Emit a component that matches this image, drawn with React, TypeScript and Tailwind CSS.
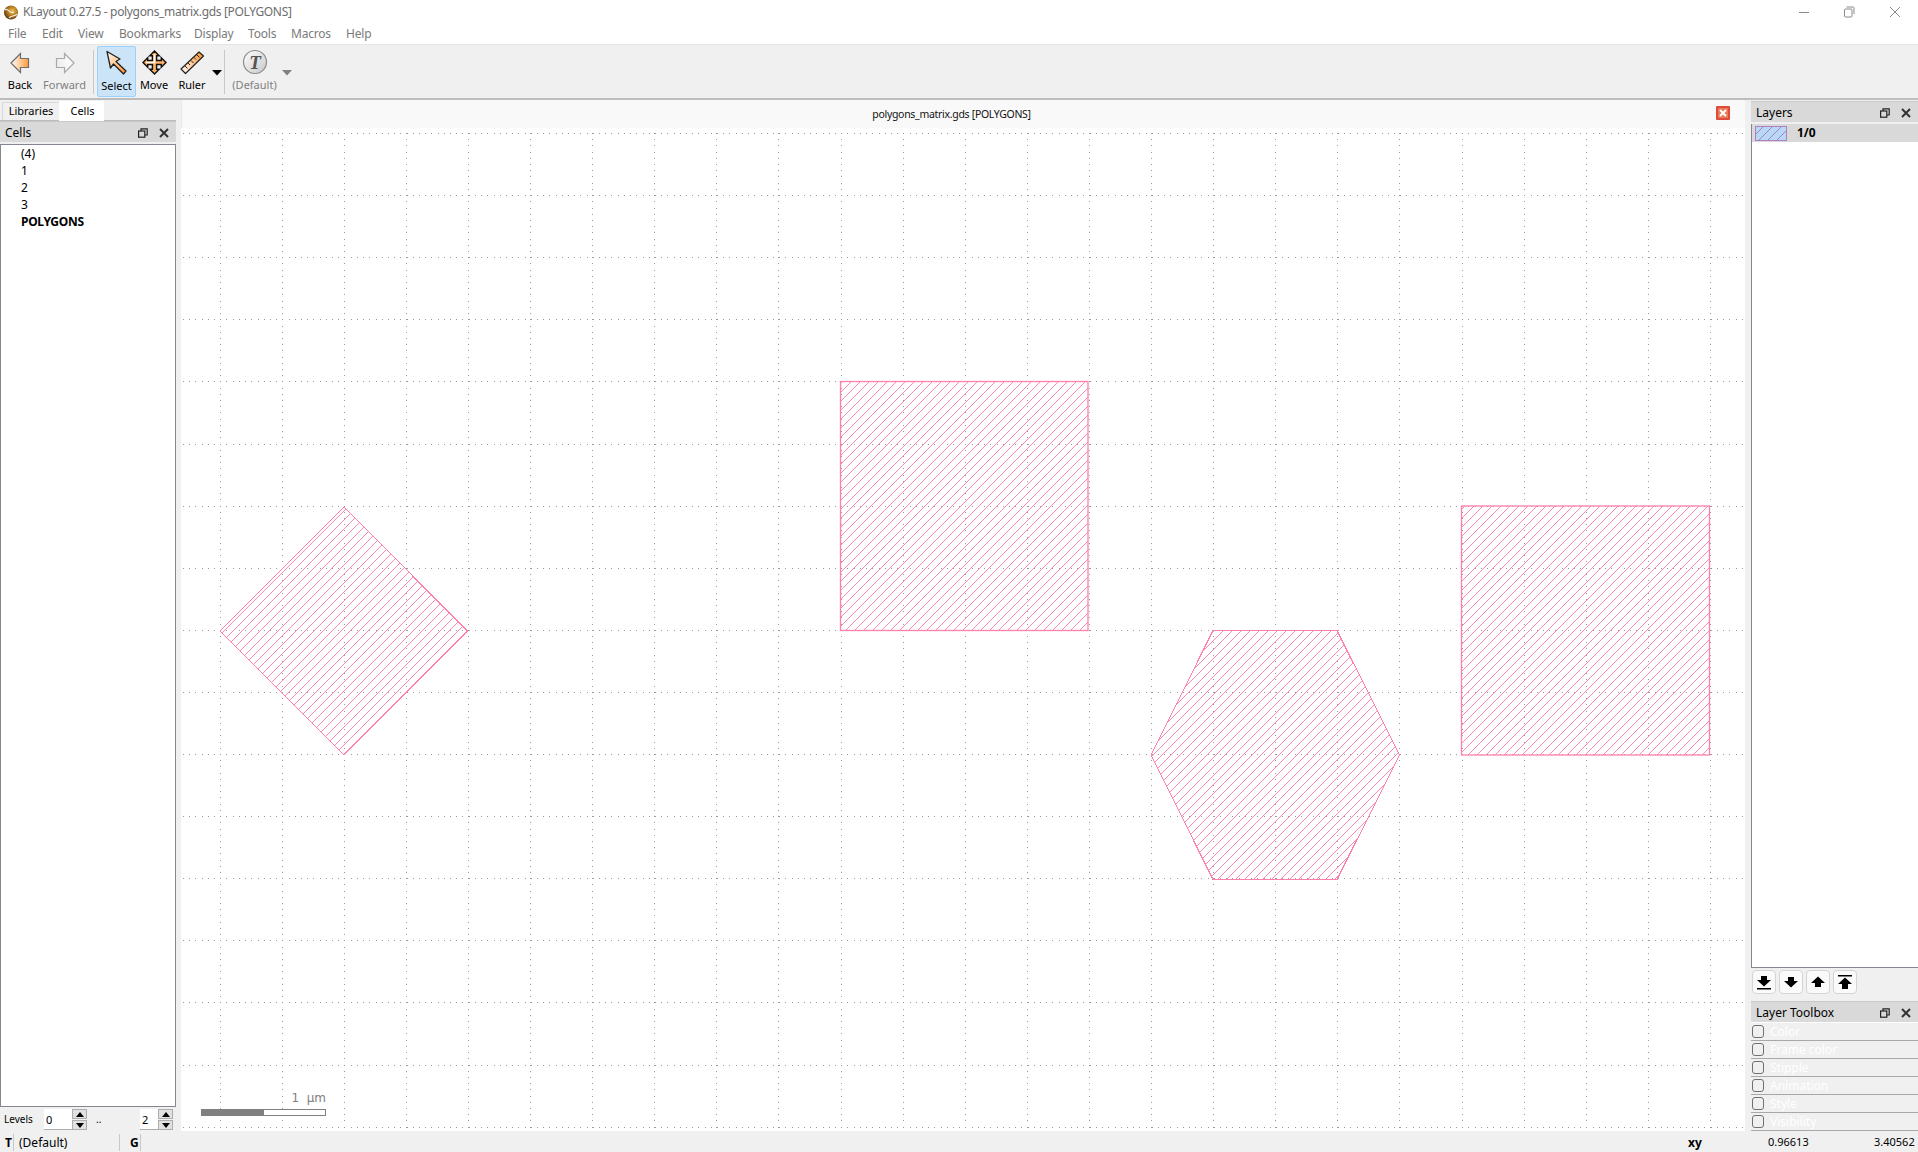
import { ReactNode } from "react";

const menus = [
  { label: "File", w: "w-[34px]" },
  { label: "Edit", w: "w-[36px]" },
  { label: "View", w: "w-[41px]" },
  { label: "Bookmarks", w: "w-[75px]" },
  { label: "Display", w: "w-[54px]" },
  { label: "Tools", w: "w-[43px]" },
  { label: "Macros", w: "w-[55px]" },
  { label: "Help", w: "w-[40px]" },
];

const cells = ["(4)", "1", "2", "3"];
const toolbox = ["Color", "Frame color", "Stipple", "Animation", "Style", "Visibility"];

const gridX = Array.from({ length: 25 }, (_, k) => Math.round(219.5 + 62.1 * k) + 0.5);
const gridY = Array.from({ length: 17 }, (_, k) => Math.round(133 + 62.1 * k) + 0.5);

const DockTitle = ({ title }: { title: string }) => (
  <div className="h-[21px] flex items-center bg-[#d9d9d9] border-t border-[#c8c8c8] pt-[1px] pl-[5px] pr-[7px] text-[12px] text-black">
    <span className="flex-1">{title}</span>
    <svg width="10" height="10" viewBox="0 0 10 10" className="mr-[11px]" fill="none" stroke="#222" strokeWidth="1.2">
      <rect x="0.6" y="3" width="6.2" height="6.2" />
      <path d="M3 3V0.8H9.2V7H6.8" />
    </svg>
    <svg width="10" height="10" viewBox="0 0 10 10" fill="none" stroke="#333" strokeWidth="2">
      <path d="M1 1L9 9M9 1L1 9" />
    </svg>
  </div>
);

const ToolButton = ({
  label,
  width,
  active,
  muted,
  children,
}: {
  label: string;
  width: string;
  active?: boolean;
  muted?: boolean;
  children: ReactNode;
}) => (
  <div
    className={`${width} h-[51px] flex flex-col items-center rounded-[2px] border ${
      active ? "bg-[#cce4f7] border-[#99d1ff]" : "border-transparent"
    }`}
  >
    <div className="h-[31px] flex items-center justify-center">{children}</div>
    <span className={`text-[11px] leading-[14px] ${active ? "mt-[1px]" : ""} ${muted ? "text-[#808080]" : "text-black"}`}>{label}</span>
  </div>
);

const Caret = ({ color }: { color: string }) => (
  <svg width="10" height="6" viewBox="0 0 10 6" className="mt-[2px]">
    <path d="M0 0H10L5 5.5Z" fill={color} />
  </svg>
);

const Spin = () => (
  <div className="w-[15px] h-[21px] flex flex-col gap-[1px] bg-[#f0f0f0]">
    <div className="h-[10px] bg-[#e1e1e1] border border-[#adadad] flex items-center justify-center">
      <svg width="8" height="5" viewBox="0 0 8 5"><path d="M4 0L8 5H0Z" fill="#000" /></svg>
    </div>
    <div className="h-[10px] bg-[#e1e1e1] border border-[#adadad] flex items-center justify-center">
      <svg width="8" height="5" viewBox="0 0 8 5"><path d="M0 0H8L4 5Z" fill="#000" /></svg>
    </div>
  </div>
);

const LayerButton = ({ d }: { d: string }) => (
  <div className="w-[24px] h-[24px] rounded-[4px] bg-[#fafafa] border border-[#d4d4d4] flex items-center justify-center">
    <svg width="16" height="16" viewBox="0 0 16 16"><path d={d} fill="#000" /></svg>
  </div>
);

const LayoutCanvas = () => (
  <svg viewBox="181 128 1564 1003" width="1564" height="1003" className="block">
    <defs>
      <pattern id="hatch" width="9" height="9" patternUnits="userSpaceOnUse">
        <path d="M0 9L9 0" stroke="#ff8ab0" strokeWidth="1" shapeRendering="crispEdges" />
      </pattern>
    </defs>
    {gridY.map((y) => (
      <line key={y} x1="183" x2="1745" y1={y} y2={y} stroke="#9a9a9a" strokeDasharray="1 5.21" shapeRendering="crispEdges" />
    ))}
    {gridX.map((x) => (
      <line key={x} x1={x} x2={x} y1="133" y2="1131" stroke="#9a9a9a" strokeDasharray="1 5.21" shapeRendering="crispEdges" />
    ))}
    <g fill="url(#hatch)" stroke="#ff80a8">
      <polygon points="344,507 467.5,631 344,755 220,631" strokeWidth="1" shapeRendering="crispEdges" />
      <rect x="840.5" y="381.5" width="247.5" height="249" strokeWidth="1.3" />
      <polygon points="1151,755 1213,630.5 1337,630.5 1399.5,755 1337,879.5 1213,879.5" strokeWidth="1" shapeRendering="crispEdges" />
      <rect x="1461.5" y="506" width="248" height="249" strokeWidth="1.3" />
    </g>
  </svg>
);

export default function App() {
  return (
    <div className="w-[1918px] h-[1152px] flex flex-col overflow-hidden bg-[#f0f0f0] font-['Noto_Sans','Open_Sans',sans-serif] text-black">
      {/* Title and menu */}
      <div className="h-[45px] bg-white border-b border-[#e5e5e5] shrink-0">
        <div className="h-[24px] flex items-center pl-[2px]">
          <svg width="18" height="18" viewBox="0 0 18 18">
            <defs>
              <radialGradient id="logo" cx="0.6" cy="0.4" r="0.7">
                <stop offset="0" stopColor="#f4c04a" />
                <stop offset="0.6" stopColor="#a06a18" />
                <stop offset="1" stopColor="#3a2a10" />
              </radialGradient>
            </defs>
            <circle cx="9" cy="9.5" r="7" fill="url(#logo)" />
            <path d="M3 7C6 4 8 12 12 9M7 15C9 12 13 14 15 11" stroke="#eee" strokeWidth="1.2" fill="none" />
          </svg>
          <span className="ml-[3px] text-[12px] tracking-[-0.33px] text-[#6d6d6d]">KLayout 0.27.5 - polygons_matrix.gds [POLYGONS]</span>
          <div className="ml-auto flex items-center">
            <svg width="12" height="12" viewBox="0 0 12 12" className="mr-[33px]"><path d="M1 6.5H11" stroke="#8a8a8a" /></svg>
            <svg width="12" height="12" viewBox="0 0 12 12" className="mr-[34px]" fill="none" stroke="#8a8a8a">
              <rect x="1.5" y="3" width="7.5" height="8" rx="1" />
              <path d="M3.5 1H10A1 1 0 0 1 11 2V8" />
            </svg>
            <svg width="12" height="12" viewBox="0 0 12 12" className="mr-[17px]"><path d="M1 1L11 11M11 1L1 11" stroke="#8a8a8a" /></svg>
          </div>
        </div>
        <div className="h-[19px] flex items-center pl-[8px] text-[12px] tracking-[-0.2px] text-[#7a7a7a]">
          {menus.map((m) => (
            <span key={m.label} className={m.w}>{m.label}</span>
          ))}
        </div>
      </div>

      {/* Toolbar */}
      <div className="h-[55px] shrink-0 flex items-center pl-[2px] border-b-2 border-[#bdbdbd]">
        <ToolButton label="Back" width="w-[36px]">
          <svg width="20" height="22" viewBox="0 0 20 22">
            <defs>
              <linearGradient id="back" x1="0" x2="1" y1="0" y2="0">
                <stop offset="0" stopColor="#fff" />
                <stop offset="1" stopColor="#ff9a3c" />
              </linearGradient>
            </defs>
            <path d="M1 11L10.500 1.500V6.500H18.500V15.500H10.500V20.500Z" fill="url(#back)" stroke="#6e6e6e" strokeWidth="1.2" />
          </svg>
        </ToolButton>
        <div className="ml-[1px]">
          <ToolButton label="Forward" width="w-[51px]" muted>
            <svg width="20" height="22" viewBox="0 0 20 22">
              <defs>
                <linearGradient id="fwd" x1="0" x2="1" y1="0" y2="0">
                  <stop offset="0" stopColor="#ededed" />
                  <stop offset="1" stopColor="#fff" />
                </linearGradient>
              </defs>
              <path d="M19 11L9.500 1.500V6.500H1.500V15.500H9.500V20.500Z" fill="url(#fwd)" stroke="#a8a8a8" strokeWidth="1.2" />
            </svg>
          </ToolButton>
        </div>
        <div className="w-px h-[44px] bg-[#c8c8c8] ml-[3px] mr-[3px]" />
        <ToolButton label="Select" width="w-[39px]" active>
          <svg width="24" height="26" viewBox="0 0 24 26">
            <defs>
              <linearGradient id="sel" x1="0" x2="1" y1="0" y2="1">
                <stop offset="0" stopColor="#fff" />
                <stop offset="1" stopColor="#ff8c1a" />
              </linearGradient>
            </defs>
            <path d="M2 1.500L15 9L11 11.500L21 21L18.500 24L8.500 14L5.500 18Z" fill="url(#sel)" stroke="#222" strokeWidth="1.3" strokeLinejoin="round" />
          </svg>
        </ToolButton>
        <ToolButton label="Move" width="w-[36px]">
          <svg width="25" height="25" viewBox="0 0 24 24">
            <path d="M12 1L16.500 5.500H14V10H18.500V7.500L23 12L18.500 16.500V14H14V18.500H16.500L12 23L7.500 18.500H10V14H5.500V16.500L1 12L5.500 7.500V10H10V5.500H7.500Z" fill="#ffb066" stroke="#111" strokeWidth="1.4" strokeLinejoin="miter" />
            <path d="M12 4V12H4" stroke="#fff" strokeWidth="1.6" fill="none" />
          </svg>
        </ToolButton>
        <ToolButton label="Ruler" width="w-[40px]">
          <svg width="24" height="24" viewBox="0 0 24 24">
            <defs>
              <linearGradient id="rul" x1="0" x2="1" y1="1" y2="0">
                <stop offset="0" stopColor="#fff" />
                <stop offset="1" stopColor="#ff8f26" />
              </linearGradient>
            </defs>
            <path d="M1 18L19 1L23.500 5L5.500 22.500Z" fill="url(#rul)" stroke="#222" strokeWidth="1.2" strokeLinejoin="round" />
            <path d="M5 15L7.500 17.500M8 12L10 14M11 9.500L13.500 12M14 6.500L16 8.500M17 4L19.500 6.500" stroke="#222" strokeWidth="1" />
          </svg>
        </ToolButton>
        <div className="w-[15px] -ml-[3px] flex justify-center"><Caret color="#000" /></div>
        <div className="w-px h-[44px] bg-[#c8c8c8]" />
        <ToolButton label="(Default)" width="w-[59px]" muted>
          <svg width="26" height="26" viewBox="0 0 26 26" className="-mt-[1px]">
            <defs>
              <linearGradient id="tcirc" x1="0" x2="1" y1="0" y2="1">
                <stop offset="0" stopColor="#fff" />
                <stop offset="1" stopColor="#c8c8c8" />
              </linearGradient>
            </defs>
            <circle cx="13" cy="13" r="11.500" fill="url(#tcirc)" stroke="#8c8c8c" strokeWidth="1.2" />
            <text x="13" y="20" textAnchor="middle" fontSize="19" fontWeight="700" fontStyle="italic" fontFamily="Liberation Serif, serif" fill="#555">T</text>
          </svg>
        </ToolButton>
        <div className="-ml-[2px] flex"><Caret color="#808080" /></div>
      </div>

      {/* Main area */}
      <div className="h-[1031px] shrink-0 flex">
        {/* Left dock */}
        <div className="w-[176px] flex flex-col">
          <div className="h-[21px] flex items-end pl-[2px] border-b border-[#bdbdbd] text-[11px]">
            <div className="w-[57px] h-[18px] flex items-center justify-center bg-[#f0f0f0] border-t border-l border-[#d9d9d9]">Libraries</div>
            <div className="w-[45px] h-[20px] -mb-px flex items-center justify-center pl-[2px] bg-white">Cells</div>
          </div>
          <DockTitle title="Cells" />
          <div className="h-[963px] mt-[2px] bg-white border border-[#828790] pl-[20px] text-[12px] leading-[17px]">
            {cells.map((c) => (
              <div key={c}>{c}</div>
            ))}
            <div className="font-bold tracking-[-0.3px]">POLYGONS</div>
          </div>
          <div className="h-[23px] flex items-center pl-[4px] pt-[2px] text-[10px]">
            <span className="w-[40px]">Levels</span>
            <div className="w-[28px] h-[21px] bg-white border-b border-[#adadad] pl-[2px] text-[11px] leading-[21px]">0</div>
            <Spin />
            <span className="w-[53px] pl-[9px]">..</span>
            <div className="w-[18px] h-[21px] bg-white border-b border-[#adadad] pl-[2px] text-[11px] leading-[21px]">2</div>
            <Spin />
          </div>
        </div>

        {/* Layout view */}
        <div className="w-[1564px] ml-[5px] flex flex-col">
          <div className="h-[28px] bg-[#f9f9f9] border-l border-[#e8e8e8] relative flex items-center justify-center pr-[24px] pt-[2px] text-[10.5px] tracking-[-0.3px]">
            <span className="text-[#111]">polygons_matrix.gds [POLYGONS]</span>
            <div className="absolute left-[1534px] top-[6px] w-[14px] h-[14px] rounded-[1px] bg-[#e97c5a] border-2 border-[#e04a3a] flex items-center justify-center">
              <svg width="8" height="8" viewBox="0 0 8 8"><path d="M1 1L7 7M7 1L1 7" stroke="#fff" strokeWidth="2" /></svg>
            </div>
          </div>
          <div className="h-[1003px] bg-white relative">
            <LayoutCanvas />
            <div className="absolute left-[20px] top-[963px] w-[125px] flex flex-col items-end">
              <span className="font-['DejaVu_Sans',sans-serif] text-[12px] leading-[14px] text-[#808080] pb-[4px]">1 &nbsp;µm</span>
              <div className="w-full h-[7px] border border-[#808080] bg-white">
                <div className="w-1/2 h-full bg-[#808080]" />
              </div>
            </div>
          </div>
        </div>

        {/* Right docks */}
        <div className="w-[167px] ml-[6px] flex flex-col">
          <div className="mt-[1px]"><DockTitle title="Layers" /></div>
          <div className="h-[845px] mt-[2px] bg-white border-l border-b border-[#828790]">
            <div className="h-[18px] bg-[#d9d9d9] flex items-center pl-[3px]">
              <svg width="32" height="15" viewBox="0 0 32 15">
                <defs>
                  <pattern id="swatch" width="9" height="9" patternUnits="userSpaceOnUse">
                    <path d="M0 9L9 0" stroke="#a080d0" strokeWidth="1" />
                  </pattern>
                </defs>
                <rect x="0.5" y="0.5" width="31" height="14" fill="#b8d8f4" />
                <rect x="0.5" y="0.5" width="31" height="14" fill="url(#swatch)" stroke="#b080c0" />
              </svg>
              <span className="ml-[10px] text-[12px] font-bold">1/0</span>
            </div>
          </div>
          <div className="flex gap-[3px] mt-[2px] pl-[1px]">
            <LayerButton d="M5 2H11V6H15L8 12.500L1 6H5ZM1 14H15V15.500H1Z" />
            <LayerButton d="M5 3H11V7H15L8 13.500L1 7H5Z" />
            <LayerButton d="M5 13H11V9H15L8 2.500L1 9H5Z" />
            <LayerButton d="M1 1H15V2.500H1ZM5 15H11V10H15L8 3.500L1 10H5Z" />
          </div>
          <div className="mt-[7px]"><DockTitle title="Layer Toolbox" /></div>
          <div className="border-t border-white">
            {toolbox.map((t) => (
              <div key={t} className="h-[18px] flex items-center border-b border-[#a8a8a8] pl-[1px]">
                <div className="w-[12px] h-[13px] rounded-[3px] border border-[#707070] bg-[#f0f0f0]" />
                <span className="ml-[6px] text-[12px] text-white">{t}</span>
              </div>
            ))}
          </div>
        </div>
      </div>

      {/* Status bar */}
      <div className="h-[21px] shrink-0 flex items-center pt-[2px] text-[12px]">
        <span className="w-[13px] pl-[5px] font-bold">T</span>
        <div className="w-px h-[17px] bg-[#c8c8c8]" />
        <span className="w-[105px] pl-[5px]">(Default)</span>
        <div className="w-px h-[17px] bg-[#c8c8c8]" />
        <span className="w-[20px] pl-[10px] font-bold">G</span>
        <div className="w-px h-[17px] bg-[#c8c8c8]" />
        <span className="ml-[1547px] w-[80px] font-bold">xy</span>
        <span className="w-[106px] text-[11px]">0.96613</span>
        <span className="text-[11px]">3.40562</span>
      </div>
    </div>
  );
}
